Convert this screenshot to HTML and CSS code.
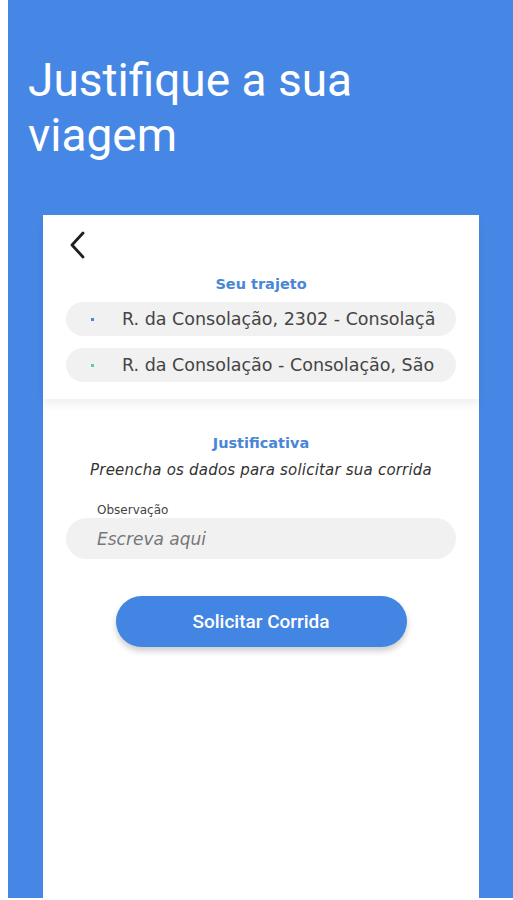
FILE: index.html
```html
<!DOCTYPE html>
<html lang="pt-BR">
<head>
  <meta charset="UTF-8" />
  <meta name="viewport" content="width=device-width, initial-scale=1" />
  <title>Justifique a sua viagem</title>
  <link rel="stylesheet" href="styles.css">
</head>
<body>
  <div class="screen">
    <h1 class="title">Justifique a sua viagem</h1>

    <div class="card">
      <div class="route">
        <button class="back" aria-label="Voltar">
          <svg width="20" height="28" viewBox="0 0 20 28">
            <path d="M15 2 L4 14 L15 26" fill="none" stroke="#1f1f1f" stroke-width="2.8" stroke-linecap="round" stroke-linejoin="round"/>
          </svg>
        </button>
        <h2 class="label">Seu trajeto</h2>
        <div class="pill">
          <span class="dot dot-origin"></span>
          <span class="pill-text">R. da Consolação, 2302 - Consolação</span>
        </div>
        <div class="pill">
          <span class="dot dot-dest"></span>
          <span class="pill-text">R. da Consolação - Consolação, São</span>
        </div>
      </div>

      <div class="form">
        <h2 class="label">Justificativa</h2>
        <p class="hint">Preencha os dados para solicitar sua corrida</p>
        <label class="field-label" for="obs">Observação</label>
        <input class="field" id="obs" type="text" placeholder="Escreva aqui" />
        <button class="submit">Solicitar Corrida</button>
      </div>
    </div>
  </div>
</body>
</html>
```

FILE: styles.css
```css
body { margin: 0 0 2px 8px; background: #fff; font-family: "DejaVu Sans", sans-serif; }
.screen { height: 898px; background: #4687e5; display: flex; flex-direction: column; }
.title { margin: 53px 0 0; padding: 0 120px 0 20px; font-family: Roboto, sans-serif; font-weight: 400; font-size: 46px; line-height: 55px; color: #fff; }
.card { flex: 1; margin: 52px 34px 0 35px; background: #fff; display: flex; flex-direction: column; }

.route { padding: 16px 23px 17px; box-shadow: 0 6px 8px rgba(0,0,0,0.06); }
.back { display: block; width: 24px; height: 30px; padding: 0; border: 0; background: none; }
.label { margin: 0; text-align: center; font-size: 14.5px; font-weight: 700; color: #4a86d6; line-height: 20px; }
.route .label { margin-top: 13px; margin-bottom: 8px; }
.form .label { margin-top: 2px; }
.pill { display: flex; align-items: center; height: 34px; margin-bottom: 12px; padding: 0 21px 0 25px; border-radius: 17px; background: #f1f1f1; overflow: hidden; }
.pill:last-child { margin-bottom: 0; }
.dot { flex: none; width: 3px; height: 3px; margin-right: 28px; }
.dot-origin { background: #4a86d6; }
.dot-dest { background: #4fd1b8; }
.pill-text { white-space: nowrap; overflow: hidden; font-size: 17.5px; color: #444; }

.form { padding: 32px 23px 0; display: flex; flex-direction: column; }
.hint { margin: 8px 0 0; text-align: center; font-style: italic; font-size: 15px; letter-spacing: 0.2px; line-height: 19px; color: #333; }
.field-label { margin: 23px 0 0 31px; font-size: 12px; line-height: 15px; color: #444; }
.field { height: 41px; margin-top: 0; padding: 0 31px; border: 0; border-radius: 21px; background: #f1f1f1; font-family: "DejaVu Sans", sans-serif; font-size: 17px; font-style: italic; }
.field::placeholder { color: #777; }
.submit { align-self: center; width: 291px; height: 51px; margin-top: 37px; border: 0; border-radius: 26px; background: #4285e3; color: #fff; font-family: Roboto, sans-serif; font-weight: 500; font-size: 19px; box-shadow: 0 4px 6px rgba(0,0,0,0.2); }
```
